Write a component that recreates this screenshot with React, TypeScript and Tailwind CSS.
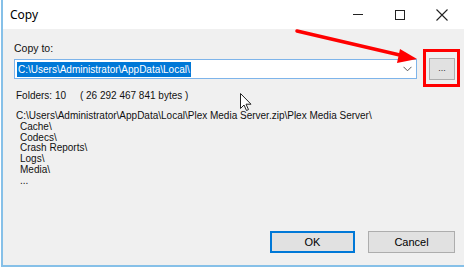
import React from "react";

const font = { fontFamily: '"Liberation Sans", Arial, sans-serif' };

const folders = ["Cache\\", "Codecs\\", "Crash Reports\\", "Logs\\", "Media\\", "..."];

export default function App() {
  return (
    <div className="relative w-[464px] h-[271px] bg-white overflow-hidden" style={font}>
      <div className="ml-[1px] h-[267px] border-l-2 border-b-2 border-[#86c0e8] flex flex-col">
        {/* title bar */}
        <div className="h-[29px] bg-white flex items-center shrink-0">
          <span className="pl-[7px] text-[12px] text-black" style={{ fontFamily: '"Noto Sans", "Open Sans", sans-serif' }}>
            Copy
          </span>
          <div className="ml-auto flex items-center h-full text-[#1a1a1a]">
            <div className="w-[42px] h-full flex items-center justify-center">
              <div className="w-[10px] h-[1px] bg-[#222]" />
            </div>
            <div className="w-[42px] h-full flex items-center justify-center">
              <div className="w-[10px] h-[10px] border border-[#222]" />
            </div>
            <div className="w-[42px] h-full flex items-center justify-center mr-[1px]">
              <svg width="12" height="12" viewBox="0 0 12 12">
                <path d="M0.5 0.5 L11.5 11.5 M11.5 0.5 L0.5 11.5" stroke="#222" strokeWidth="1.1" />
              </svg>
            </div>
          </div>
        </div>

        {/* body */}
        <div className="flex-1 bg-[#f0f0f0] pl-[11px] pr-[9px] flex flex-col text-[10px] text-[#111]">
          <div className="mt-[13px] leading-[13px] text-[10.5px]">Copy to:</div>

          <div className="mt-[3px] flex items-center">
            <div className="w-[403px] h-[20px] bg-white border border-[#7eb4ea] flex items-center pl-[2px]">
              <span className="bg-[#0078d7] text-white leading-[15px] px-[1px] text-[10px]">C:\Users\Administrator\AppData\Local\</span>
              <svg className="ml-auto mr-[4px]" width="9" height="6" viewBox="0 0 9 6">
                <path d="M0.5 0.8 L4.5 4.8 L8.5 0.8" fill="none" stroke="#555" strokeWidth="1" />
              </svg>
            </div>
            <div className="relative ml-[12px] w-[26px] h-[22px] bg-[#e1e1e1] border border-[#adadad] flex items-center justify-center text-[9px] text-[#333]">
              ...
              <div className="absolute left-[-7px] top-[-10px] w-[37px] h-[38px] border-[3px] border-[#ff0000]" />
            </div>
          </div>

          <div className="mt-[9px] leading-[13px] pl-[2px]">
            Folders: 10&nbsp;&nbsp;&nbsp;&nbsp;&nbsp;( 26 292 467 841 bytes )
          </div>

          <div className="mt-[9px] pl-[2px] leading-[10.8px]">
            <div>C:\Users\Administrator\AppData\Local\Plex Media Server.zip\Plex Media Server\</div>
            {folders.map((f) => (
              <div key={f} className="pl-[4px]">
                {f}
              </div>
            ))}
          </div>

          <div className="mt-auto mb-[12px] flex justify-end gap-[13px]">
            <button className="w-[85px] h-[22px] bg-[#e1e1e1] border-2 border-[#0078d7] text-[11px] text-black">OK</button>
            <button className="w-[87px] h-[22px] bg-[#e1e1e1] border border-[#adadad] text-[11px] text-black">Cancel</button>
          </div>
        </div>
      </div>

      {/* red annotation arrow */}
      <svg className="absolute left-0 top-0 pointer-events-none" width="464" height="271">
        <line x1="297" y1="31" x2="404" y2="56" stroke="#ff0000" strokeWidth="3.5" strokeLinecap="round" />
        <polygon points="417,59 400,49 397,63" fill="#ff0000" />
      </svg>

      {/* mouse cursor */}
      <svg className="absolute left-[240px] top-[93px]" width="13" height="19" viewBox="0 0 13 19">
        <path d="M0.5 0.5 L0.5 15.5 L4 12 L6.5 17.5 L8.5 16.6 L6 11.2 L11 11.2 Z" fill="#fff" stroke="#222" strokeWidth="1" />
      </svg>
    </div>
  );
}
